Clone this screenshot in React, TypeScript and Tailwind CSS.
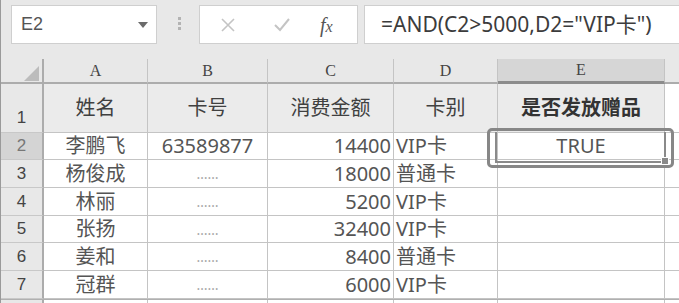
const FONT = "font-['Noto_Sans','Noto_Sans_CJK_SC',sans-serif]"

const COLS = ['w-[104px]', 'w-[120px]', 'w-[126px]', 'w-[104px]', 'w-[167px]']
const LETTERS = ['A', 'B', 'C', 'D', 'E']
const HEADERS = ['姓名', '卡号', '消费金额', '卡别', '是否发放赠品']
const ALIGN = ['justify-center', 'justify-center', 'justify-end pr-[2px]', 'justify-start pl-[2px]', 'justify-center']
const HEIGHTS = ['h-[27px]', 'h-[28px]', 'h-[28px]', 'h-[27px]', 'h-[28px]', 'h-[28px]']

const ROWS = [
  ['李鹏飞', '63589877', '14400', 'VIP卡', 'TRUE'],
  ['杨俊成', '……', '18000', '普通卡', ''],
  ['林丽', '……', '5200', 'VIP卡', ''],
  ['张扬', '……', '32400', 'VIP卡', ''],
  ['姜和', '……', '8400', '普通卡', ''],
  ['冠群', '……', '6000', 'VIP卡', ''],
]

function TopBar() {
  return (
    <div className="h-[59px] bg-[#e8e8e8] flex items-start pt-[5px]">
      <div className="ml-[10px] w-[146px] h-[39px] bg-white border border-[#cfcfcf] flex items-center justify-between pl-[9px] pr-[8px]">
        <span className="text-[18px] text-[#555] font-['Liberation_Sans',sans-serif]">E2</span>
        <svg width="10" height="6" viewBox="0 0 10 6"><path d="M0 0h10L5 6z" fill="#6b6b6b" /></svg>
      </div>
      <div className="ml-[21px] mt-[12px] flex flex-col gap-[2px]">
        <div className="w-[3px] h-[3px] bg-[#b3b3b3]" />
        <div className="w-[3px] h-[3px] bg-[#b3b3b3]" />
        <div className="w-[3px] h-[3px] bg-[#b3b3b3]" />
      </div>
      <div className="ml-[18px] w-[159px] h-[39px] bg-white border border-[#cfcfcf] flex items-center">
        <svg className="ml-[21px]" width="14" height="14" viewBox="0 0 14 14">
          <path d="M1 1L13 13M13 1L1 13" stroke="#c4c4c4" strokeWidth="1.6" />
        </svg>
        <svg className="ml-[39px]" width="16" height="14" viewBox="0 0 16 14">
          <path d="M1 7l5 5L15 1" stroke="#c4c4c4" strokeWidth="2" fill="none" />
        </svg>
        <span className="ml-[30px] text-[20px] italic text-[#555] font-['Liberation_Serif',serif]">
          f<span className="text-[16px]">x</span>
        </span>
      </div>
      <div className="ml-[6px] flex-1 -mr-[4px] h-[39px] bg-white border border-[#cfcfcf] flex items-center pl-[16px]">
        <span className={`text-[21px] text-[#3c3c3c] ${FONT}`}>=AND(C2&gt;5000,D2="VIP卡")</span>
      </div>
    </div>
  )
}

function ColumnHeader() {
  return (
    <div className="flex h-[25px] bg-[#e8e8e8]">
      <div className="w-[43px] border-r-2 border-b-2 border-[#acacac] relative">
        <svg className="absolute left-[23px] top-[7px]" width="15" height="15" viewBox="0 0 15 15">
          <path d="M15 0V15H0z" fill="#bcbcbc" />
        </svg>
      </div>
      {LETTERS.map((l, i) => (
        <div
          key={l}
          className={`${COLS[i]} flex items-center justify-center border-r border-[#c4c4c4] text-[16px] font-['Liberation_Serif',serif] text-[#444] ${
            l === 'E' ? 'bg-[#d6d6d6] border-b-[3px] border-b-[#8c8c8c]' : 'border-b-2 border-b-[#acacac]'
          }`}
        >
          {l}
        </div>
      ))}
      <div className="flex-1 border-b-2 border-b-[#acacac]" />
    </div>
  )
}

export default function App() {
  return (
    <div className={`relative w-[679px] h-[303px] overflow-hidden bg-white border-l border-[#9a9a9a] ${FONT}`}>
      <TopBar />
      <ColumnHeader />

      <div className="flex h-[49px]">
        <div className="w-[43px] bg-[#e8e8e8] border-r-2 border-b border-r-[#acacac] border-b-[#c8c8c8] flex items-end justify-center pb-[2px] text-[17px] text-[#444] font-['Liberation_Sans',sans-serif]">
          1
        </div>
        {HEADERS.map((h, i) => (
          <div
            key={h}
            className={`${COLS[i]} bg-[#ebebeb] border-r border-b border-[#c4c4c4] flex items-center justify-center text-[20px] ${
              i === 4 ? 'font-bold text-[#333]' : 'font-normal text-[#404040]'
            }`}
          >
            {h}
          </div>
        ))}
        <div className="flex-1 border-b border-[#c4c4c4]" />
      </div>

      {ROWS.map((row, r) => (
        <div key={r} className={`flex ${HEIGHTS[r]}`}>
          <div
            className={`w-[43px] border-r-2 border-b border-r-[#acacac] border-b-[#c8c8c8] flex items-center justify-center text-[17px] font-['Liberation_Sans',sans-serif] ${
              r === 0 ? 'bg-[#d4d4d4] text-[#777]' : 'bg-[#e8e8e8] text-[#444]'
            }`}
          >
            {r + 2}
          </div>
          {row.map((v, i) => (
            <div
              key={i}
              className={`${COLS[i]} border-r border-b border-[#c4c4c4] flex items-center ${ALIGN[i]} ${
                v === '……' ? 'text-[14px] text-[#a8a8a8]' : 'text-[20px] text-[#555]'
              }`}
            >
              {v}
            </div>
          ))}
          <div className="flex-1 border-b border-[#c4c4c4]" />
        </div>
      ))}

      <div className="flex h-[10px] border-t border-[#b0b0b0]">
        <div className="w-[43px] bg-[#e8e8e8] border-r-2 border-[#acacac]" />
        {COLS.map((c, i) => (
          <div key={i} className={`${c} border-r border-[#c4c4c4]`} />
        ))}
      </div>

      {/* selection on E2 */}
      <div className="absolute left-[486px] top-[128px] w-[187px] h-[40px] rounded-[5px] border-[3px] border-[#878787]" />
      <div className="absolute left-[494px] top-[132px] w-[171px] h-[31px] border-l-2 border-b-2 border-r-2 border-[#8a8a8a]" />
      <div className="absolute left-[660px] top-[157px] w-[8px] h-[8px] bg-[#8a8a8a] border border-white" />
    </div>
  )
}
